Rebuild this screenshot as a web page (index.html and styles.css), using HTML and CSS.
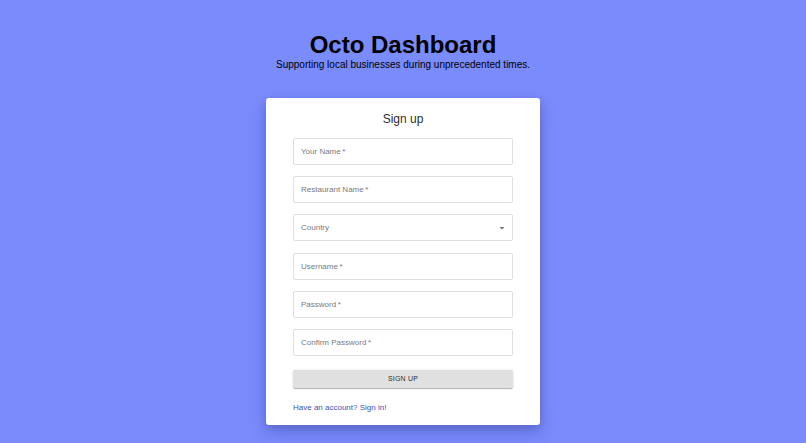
FILE: index.html
```html
<!DOCTYPE html>
<html lang="en">
<head>
<meta charset="utf-8">
<title>Octo Dashboard – Sign up</title>
<link rel="stylesheet" href="styles.css">
</head>
<body>
<main class="page">
  <header class="hero">
    <h1>Octo Dashboard</h1>
    <p>Supporting local businesses during unprecedented times.</p>
  </header>
  <section class="card">
    <h2>Sign up</h2>
    <form class="fields">
      <div class="field"><span class="label">Your Name&thinsp;*</span></div>
      <div class="field"><span class="label">Restaurant Name&thinsp;*</span></div>
      <div class="field select"><span class="label">Country</span>
        <svg class="arrow" viewBox="0 0 24 24" width="12" height="12" aria-hidden="true"><path d="M7 10l5 5 5-5z"/></svg>
      </div>
      <div class="field"><span class="label">Username&thinsp;*</span></div>
      <div class="field"><span class="label">Password&thinsp;*</span></div>
      <div class="field"><span class="label">Confirm Password&thinsp;*</span></div>
    </form>
    <button class="btn" type="button">SIGN UP</button>
    <a class="link" href="#">Have an account? Sign in!</a>
  </section>
</main>
</body>
</html>
```

FILE: styles.css
```css
html, body {
  margin: 0;
  padding: 0;
}
body {
  background: #7a8bfc;
  font-family: "Liberation Sans", Arial, Helvetica, sans-serif;
  color: #000;
}
.page {
  display: flex;
  flex-direction: column;
  align-items: center;
  padding-top: 31px;
  min-height: 100vh;
  box-sizing: border-box;
}
.hero {
  text-align: center;
}
.hero h1 {
  margin: 0;
  font-size: 24px;
  line-height: 28px;
  font-weight: 700;
}
.hero p {
  margin: 0;
  font-size: 10px;
  line-height: 12px;
}
.card {
  margin-top: 27px;
  width: 274px;
  box-sizing: border-box;
  padding: 14px 27px 12.5px;
  background: #fff;
  border-radius: 3px;
  box-shadow: 0 3px 8px rgba(0, 0, 0, 0.14), 0 8px 18px rgba(20, 30, 120, 0.2);
}
.card h2 {
  margin: 0 0 12px;
  font-size: 12px;
  line-height: 14px;
  font-weight: 400;
  text-align: center;
  color: rgba(0, 0, 0, 0.87);
}
.fields {
  display: flex;
  flex-direction: column;
  gap: 11.2px;
  margin: 0;
}
.field {
  position: relative;
  height: 27px;
  box-sizing: border-box;
  border: 1px solid #dfdfdf;
  border-radius: 2px;
  display: flex;
  align-items: center;
  padding: 0 7px;
  font-size: 8px;
  color: #7a7a7a;
}
.arrow {
  position: absolute;
  right: 4px;
  top: 6.5px;
  fill: #757575;
}
.btn {
  display: block;
  margin-top: 14px;
  width: 100%;
  height: 18px;
  border: 0;
  border-radius: 2px;
  background: #e0e0e0;
  color: rgba(0, 0, 0, 0.87);
  font-family: "Liberation Sans", Arial, sans-serif;
  font-size: 7px;
  letter-spacing: 0.2px;
  padding: 0;
  box-shadow: 0 1.5px 0.5px -1px rgba(0, 0, 0, 0.2), 0 1px 1px 0 rgba(0, 0, 0, 0.14), 0 0.5px 2.5px 0 rgba(0, 0, 0, 0.12);
}
.link {
  display: block;
  margin-top: 15px;
  font-size: 8px;
  line-height: 10px;
  color: #3f51b5;
  text-decoration: none;
}
```
